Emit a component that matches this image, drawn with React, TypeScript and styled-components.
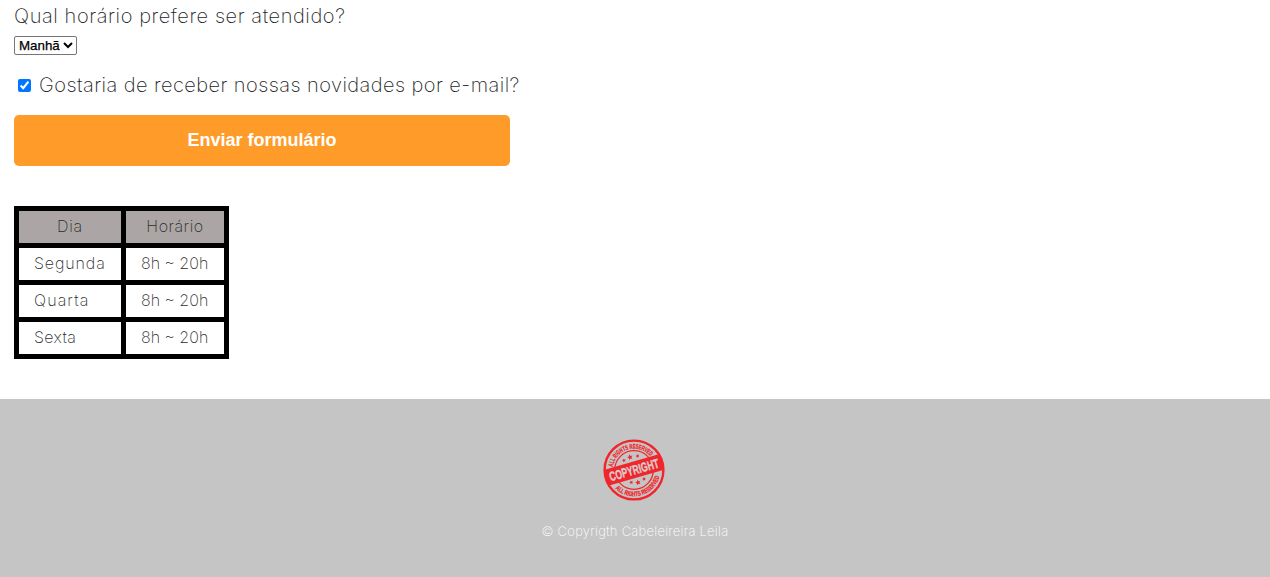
import React from "react";
import styled, { createGlobalStyle } from "styled-components";

const GlobalStyle = createGlobalStyle`
  * { box-sizing: border-box; }
  body {
    margin: 0;
    background: #fff;
    color: #1c1c1c;
    font-family: Inter, "Open Sans", sans-serif;
    font-weight: 200;
    overflow: hidden;
  }
`;

const Page = styled.div`
  height: 577px;
  display: flex;
  flex-direction: column;
`;

const Main = styled.main`
  height: 399px;
  padding-left: 14px;
  display: flex;
  flex-direction: column;
  align-items: flex-start;
`;

const Text = styled.span<{ $spacing?: number }>`
  white-space: nowrap;
  letter-spacing: ${(p) => p.$spacing ?? 0}px;
`;

const Question = styled.label`
  font-size: 20px;
  line-height: 24px;
  margin-top: 4px;
`;

const Select = styled.select`
  width: 63px;
  height: 19px;
  margin-top: 8px;
  padding: 0;
  border: 1px solid #767676;
  border-radius: 2px;
  background-color: #fff;
  color: #000;
  font: 400 13.333px "Liberation Sans", Arial, sans-serif;
  -webkit-text-stroke: 0.25px #000;
`;

const CheckRow = styled.label`
  display: flex;
  align-items: center;
  height: 24px;
  margin-top: 18px;
  font-size: 20px;
  line-height: 24px;
`;

const Checkbox = styled.input`
  width: 13px;
  height: 13px;
  margin: 1px 8px 0 4px;
  accent-color: #0075ff;
`;

const Submit = styled.button`
  width: 496px;
  height: 51px;
  margin-top: 18px;
  padding: 0;
  border: 0;
  border-radius: 5px;
  background: #ff9b29;
  color: #fff;
  font: 700 18px "Liberation Sans", Arial, sans-serif;
`;

const Table = styled.table`
  width: 215px;
  margin-top: 40px;
  border-collapse: collapse;
  table-layout: fixed;
  font-size: 16px;
  line-height: 20px;
  color: #2c2c2c;
`;

const Cell = styled.td<{ $width?: number }>`
  width: ${(p) => (p.$width ? `${p.$width}px` : "auto")};
  height: 37px;
  padding: 5px 15px 7px;
  border: 5px solid #000;
  white-space: nowrap;
`;

const HeadCell = styled(Cell)`
  background: #aba5a5;
  text-align: center;
  font-weight: 200;
`;

const Footer = styled.footer`
  flex: 1;
  display: flex;
  flex-direction: column;
  align-items: center;
  padding-top: 40px;
  background: #c5c5c5;
  color: #fff;
  font-size: 13px;
  line-height: 16px;
`;

const Stamp = styled.svg`
  display: block;
  width: 62px;
  height: 62px;
  margin: 0 2px 22px 0;
`;

const RingText = styled.text`
  font: 700 6.6px "Liberation Sans Narrow", "Liberation Sans", sans-serif;
  fill: #f0262c;
  stroke: #f0262c;
  stroke-width: 0.3px;
`;

const BannerText = styled.text`
  font: 700 13px "Liberation Sans Narrow", "Liberation Sans", sans-serif;
  fill: #dccccc;
  stroke: #dccccc;
  stroke-width: 0.4px;
`;

const Star = ({ x, y, r }: { x: number; y: number; r: number }) => {
  const points = Array.from({ length: 10 }, (_, i) => {
    const a = (i * Math.PI) / 5 - Math.PI / 2 - 0.3;
    const d = i % 2 ? r * 0.45 : r;
    return `${x + d * Math.cos(a)},${y + d * Math.sin(a)}`;
  }).join(" ");
  return <polygon points={points} fill="#f0262c" />;
};

const CopyrightStamp = () => (
  <Stamp viewBox="0 0 62 62" role="img" aria-label="Copyright">
    <defs>
      <path id="topArc" d="M9.9 28 A21.3 21.3 0 0 1 48.8 19.2" />
      <path id="bottomArc" d="M12.4 49.6 A26.3 26.3 0 0 0 57 34.7" />
    </defs>
    <circle cx="31" cy="31" r="29.4" fill="none" stroke="#f0262c" strokeWidth="2.4" />
    <circle cx="31" cy="31" r="19.3" fill="none" stroke="#f0262c" strokeWidth="1.3" />
    <RingText>
      <textPath href="#topArc" textLength="49" lengthAdjust="spacingAndGlyphs">ALL RIGHTS RESERVED</textPath>
    </RingText>
    <RingText>
      <textPath href="#bottomArc" textLength="55" lengthAdjust="spacingAndGlyphs">ALL RIGHTS RESERVED</textPath>
    </RingText>
    <Star x={27} y={18.2} r={3} />
    <Star x={34.5} y={17} r={2.1} />
    <Star x={21} y={21.4} r={2.1} />
    <Star x={35} y={43.5} r={3} />
    <Star x={28.3} y={43.4} r={2.1} />
    <Star x={41} y={40} r={2.1} />
    <g transform="rotate(-16 31 31)">
      <rect x="2" y="22.6" width="58" height="16.4" fill="#f0262c" />
      <BannerText x="5.5" y="35.5" textLength="51" lengthAdjust="spacingAndGlyphs">
        COPYRIGHT
      </BannerText>
    </g>
  </Stamp>
);

const schedule = [
  { day: "Segunda", hours: "8h ~ 20h", spacing: 0.88 },
  { day: "Quarta", hours: "8h ~ 20h", spacing: 1.1 },
  { day: "Sexta", hours: "8h ~ 20h", spacing: 0.4 },
];

export default function App() {
  return (
    <Page>
      <GlobalStyle />
      <Main>
        <Question htmlFor="period">
          <Text $spacing={0.59}>Qual horário prefere ser atendido?</Text>
        </Question>
        <Select id="period" defaultValue="Manhã">
          <option>Manhã</option>
          <option>Tarde</option>
          <option>Noite</option>
        </Select>
        <CheckRow>
          <Checkbox type="checkbox" defaultChecked />
          <Text $spacing={0.44}>Gostaria de receber nossas novidades por e-mail?</Text>
        </CheckRow>
        <Submit type="button">Enviar formulário</Submit>
        <Table>
          <thead>
            <tr>
              <HeadCell as="th" $width={107}><Text $spacing={0.7}>Dia</Text></HeadCell>
              <HeadCell as="th" $width={103}><Text $spacing={0.5}>Horário</Text></HeadCell>
            </tr>
          </thead>
          <tbody>
            {schedule.map((row) => (
              <tr key={row.day}>
                <Cell><Text $spacing={row.spacing}>{row.day}</Text></Cell>
                <Cell><Text>{row.hours}</Text></Cell>
              </tr>
            ))}
          </tbody>
        </Table>
      </Main>
      <Footer>
        <CopyrightStamp />
        <Text $spacing={0.25}>© Copyrigth Cabeleireira Leila</Text>
      </Footer>
    </Page>
  );
}
